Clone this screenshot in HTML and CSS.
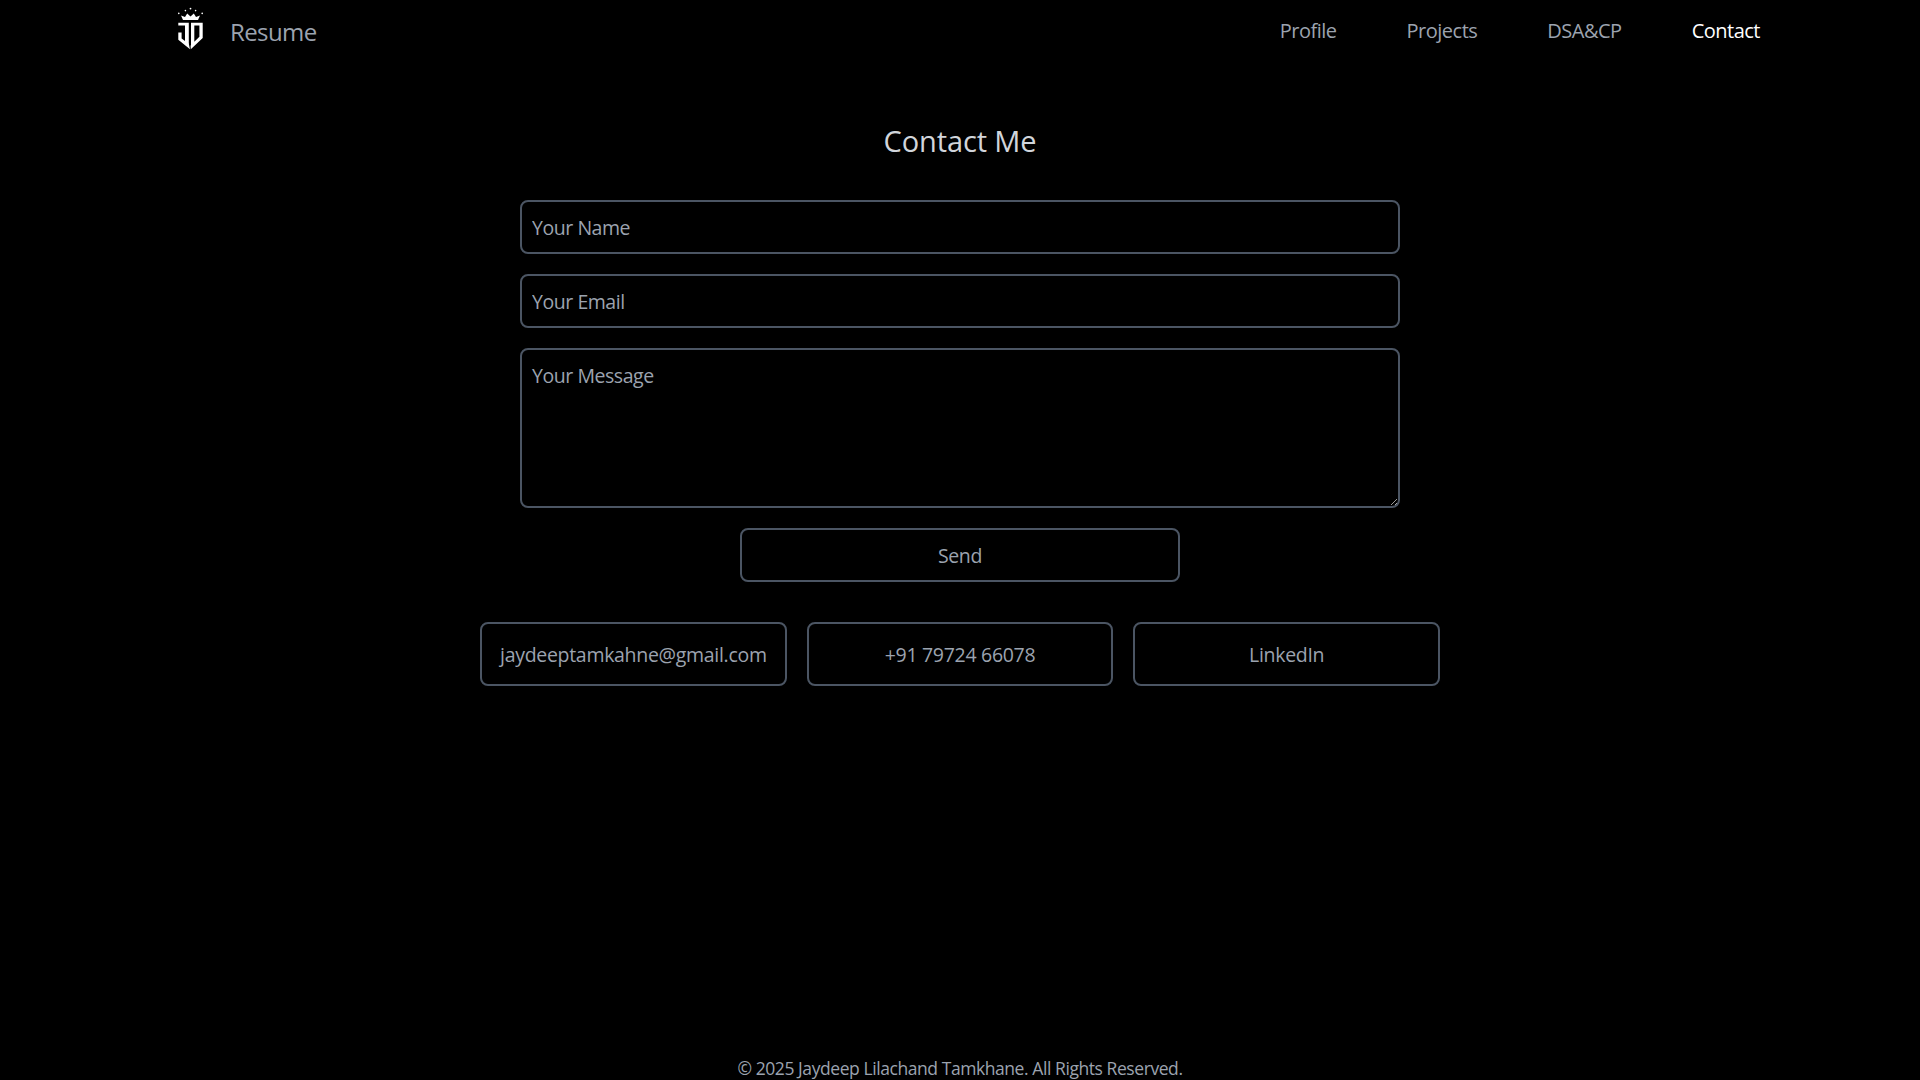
FILE: index.html
```html
<!DOCTYPE html>
<html lang="en">
<head>
<meta charset="utf-8">
<title>Contact</title>
<link rel="stylesheet" href="styles.css">
</head>
<body>
<div class="page">
  <header class="nav">
    <div class="brand">
      <svg class="logo" viewBox="0 0 30 46" aria-hidden="true">
        <g fill="#fff">
          <path d="M7 14 5 9.4 9 11 11.2 7.6 14.5 10.4 17.8 7.6 20 11 24 9.4 22 14Z"/>
          <circle cx="2.8" cy="7.4" r=".8"/><circle cx="9.4" cy="4.6" r=".8"/><circle cx="14.5" cy="2.6" r=".9"/><circle cx="19.6" cy="4.6" r=".8"/><circle cx="26.2" cy="7.4" r=".8"/>
          <path d="M2.3 16.7H12.8V38H9V19.4H2.3Z"/>
          <path d="M2.3 26.5H5.6V32.5L12.8 37.8 14 43.3 2.3 33.8Z"/>
          <path fill-rule="evenodd" d="M15 16.7H26.7V32L14.8 43.3 14.6 39.6 15 39.2ZM18.3 19.6V35.8L23.4 30.8V19.6Z"/>
        </g>
      </svg>
      <span class="brand-name">Resume</span>
    </div>
    <nav class="links">
      <a class="link">Profile</a>
      <a class="link">Projects</a>
      <a class="link">DSA&amp;CP</a>
      <a class="link active">Contact</a>
    </nav>
  </header>
  <main class="main">
    <h1 class="title">Contact Me</h1>
    <form class="form">
      <input class="field" type="text" placeholder="Your Name">
      <input class="field" type="email" placeholder="Your Email">
      <textarea class="field area" placeholder="Your Message"></textarea>
      <button class="send" type="button">Send</button>
    </form>
    <div class="contacts">
      <a class="contact">jaydeeptamkahne@gmail.com</a>
      <a class="contact">+91 79724 66078</a>
      <a class="contact">LinkedIn</a>
    </div>
  </main>
  <footer class="footer">© 2025 Jaydeep Lilachand Tamkhane. All Rights Reserved.</footer>
</div>
</body>
</html>
```
FILE: styles.css
```css
* { box-sizing: border-box; }
html, body { margin: 0; height: 100%; background: #000; }
body { font-family: "Open Sans", "Noto Sans", sans-serif; color: #9ca3af; overflow: hidden; }
.page { height: 1080px; display: flex; flex-direction: column; }
.nav { height: 62px; padding: 0 160px 0 176px; display: flex; align-items: center; justify-content: space-between; }
.brand { display: flex; align-items: center; gap: 24px; }
.logo { width: 30px; height: 46px; display: block; margin-top: -4px; }
.brand-name { font-size: 24px; letter-spacing: -0.6px; color: #9ca3af; }
.links { display: flex; gap: 70px; padding-bottom: 2px; }
.link { font-size: 20px; letter-spacing: -0.5px; color: #9ca3af; }
.link.active { color: #fff; }
.main { flex: 1; display: flex; flex-direction: column; align-items: center; padding-top: 57px; }
.title { margin: 0 0 37px; font-size: 29px; line-height: 44px; font-weight: 400; letter-spacing: -0.13px; color: #d1d5db; }
.form { width: 880px; display: flex; flex-direction: column; align-items: center; gap: 20px; }
.field { display: block; width: 880px; height: 54px; padding: 0 10px; background: #000; border: 2px solid #4b5563; border-radius: 8px; font-family: inherit; font-size: 19.5px; letter-spacing: -0.45px; color: #9ca3af; outline: none; }
.field::placeholder { color: #9ca3af; opacity: 1; }
.area { height: 160px; padding: 12px 10px; resize: vertical; }
.send { width: 440px; height: 54px; background: #000; border: 2px solid #4b5563; border-radius: 8px; font-family: inherit; font-size: 19.5px; letter-spacing: -0.4px; color: #9ca3af; }
.contacts { width: 960px; margin-top: 40px; display: grid; grid-template-columns: repeat(3, 1fr); gap: 20px; }
.contact { height: 64px; display: flex; align-items: center; justify-content: center; border: 2px solid #4b5563; border-radius: 8px; font-size: 19.5px; letter-spacing: -0.3px; color: #9ca3af; white-space: nowrap; }
.footer { height: 34px; padding-top: 10px; text-align: center; font-size: 17.5px; letter-spacing: -0.43px; color: #9ca3af; white-space: nowrap; }
```
